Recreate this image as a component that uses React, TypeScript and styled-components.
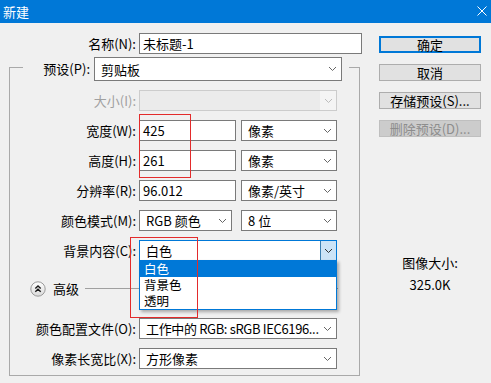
import * as React from "react";
import styled, { createGlobalStyle } from "styled-components";

const GlobalStyle = createGlobalStyle`
  body {
    margin: 0;
    background: #f0f0f0;
    font-family: "Noto Sans CJK SC", "Noto Sans", sans-serif;
    font-size: 13px;
    color: #000;
  }
  * {
    box-sizing: border-box;
  }
`;

const Window = styled.div`
  position: relative;
  width: 491px;
  height: 383px;
  display: flex;
  flex-direction: column;
  overflow: hidden;
  background: #f0f0f0;
`;

const TitleBar = styled.div`
  height: 23px;
  flex: none;
  display: flex;
  align-items: center;
  justify-content: space-between;
  padding: 0 4px 1px 3px;
  background: #0078d7;
  color: #fff;
  font-size: 13px;
`;

const Body = styled.div`
  flex: 1;
  display: flex;
`;

const LeftColumn = styled.div`
  width: 370px;
  padding-left: 9px;
  display: flex;
  flex-direction: column;
`;

const RightColumn = styled.div`
  width: 102px;
  margin-left: 9px;
  padding-top: 13px;
  display: flex;
  flex-direction: column;
`;

const Row = styled.div<{ $top?: number }>`
  display: flex;
  align-items: center;
  height: 21px;
  margin-top: ${(p) => p.$top ?? 9}px;
`;

const Label = styled.div<{ $width: number; $disabled?: boolean }>`
  width: ${(p) => p.$width}px;
  flex: none;
  margin-right: 3px;
  text-align: right;
  white-space: nowrap;
  color: ${(p) => (p.$disabled ? "#a0a0a0" : "#000")};
`;

const TextInput = styled.div<{ $width: number }>`
  width: ${(p) => p.$width}px;
  height: 21px;
  flex: none;
  display: flex;
  align-items: center;
  padding-left: 3px;
  background: #fff;
  border: 1px solid #7a7a7a;
`;

const Select = styled.div<{ $width: number; $height?: number; $gap?: number }>`
  position: relative;
  width: ${(p) => p.$width}px;
  height: ${(p) => p.$height ?? 21}px;
  flex: none;
  margin-left: ${(p) => p.$gap ?? 0}px;
  display: flex;
  align-items: center;
  justify-content: space-between;
  gap: 2px;
  padding: 0 4px 0 6px;
  background: #fff;
  border: 1px solid #7a7a7a;
  white-space: nowrap;
`;

const DisabledSelect = styled(Select)`
  padding-right: 0;
  background: #ebebeb;
  border-color: #cccccc;
`;

const FocusedSelect = styled(Select)`
  padding-right: 0;
  border-color: #0078d7;
`;

const SelectText = styled.span<{ $tight?: boolean }>`
  overflow: hidden;
  letter-spacing: ${(p) => (p.$tight ? "-0.35px" : "normal")};
`;

const ChevronBox = styled.div<{ $active?: boolean }>`
  width: 16px;
  height: 100%;
  display: flex;
  align-items: center;
  justify-content: center;
  background: ${(p) => (p.$active ? "#cce4f7" : "#f4f4f4")};
  border-left: 1px solid ${(p) => (p.$active ? "#3c7fb1" : "transparent")};
`;

const DropList = styled.div`
  position: absolute;
  top: 100%;
  left: -1px;
  width: 198px;
  background: #fff;
  border: 1px solid #0078d7;
  box-shadow: 2px 2px 3px rgba(0, 0, 0, 0.3);
  z-index: 2;
`;

const DropItem = styled.div<{ $selected?: boolean }>`
  height: 16px;
  line-height: 16px;
  font-size: 12.5px;
  padding-left: 4px;
  background: ${(p) => (p.$selected ? "#0078d7" : "#fff")};
  color: ${(p) => (p.$selected ? "#fff" : "#000")};
`;

const Group = styled.fieldset`
  width: 351px;
  margin: 3px 0 0 0;
  padding: 13px 0 6px 0;
  border: 1px solid #a9a9a9;
  min-width: 0;
`;

const Legend = styled.legend`
  margin-left: 13px;
  padding: 0 7px 0 0;
`;

const LegendRow = styled.div`
  display: flex;
  align-items: flex-start;
  height: 20px;
`;

const LegendLabel = styled.div`
  width: 67px;
  line-height: 24px;
  text-align: right;
  white-space: nowrap;
`;

const AdvancedRow = styled.div`
  display: flex;
  align-items: center;
  height: 39px;
  margin-top: 9px;
  padding: 0 21px 2px 20px;
`;

const AdvancedText = styled.span`
  margin-left: 7px;
`;

const Divider = styled.div`
  flex: 1;
  height: 1px;
  margin-left: 6px;
  background: #a0a0a0;
`;

const Button = styled.div<{ $primary?: boolean; $disabled?: boolean }>`
  height: 17px;
  margin-bottom: 11px;
  display: flex;
  align-items: center;
  justify-content: center;
  font-size: 13px;
  background: ${(p) => (p.$disabled ? "#cccccc" : "#e1e1e1")};
  color: ${(p) => (p.$disabled ? "#8d8d8d" : "#000")};
  border: ${(p) => (p.$primary ? "2px solid #0078d7" : p.$disabled ? "1px solid #bfbfbf" : "1px solid #adadad")};
`;

const Info = styled.div`
  margin-top: 106px;
  text-align: center;
  line-height: 18px;
`;

const InfoValue = styled.div`
  margin-top: 4px;
`;

const Mark = styled.div<{ $x: number; $y: number; $w: number; $h: number }>`
  position: absolute;
  left: ${(p) => p.$x}px;
  top: ${(p) => p.$y}px;
  width: ${(p) => p.$w}px;
  height: ${(p) => p.$h}px;
  border: 1px solid #e32b2b;
  z-index: 5;
  pointer-events: none;
`;

const Chevron = ({ color = "#666" }: { color?: string }) => (
  <svg width="9" height="6" viewBox="0 0 9 6" style={{ flex: "none" }}>
    <path d="M1 1 L4.5 4.5 L8 1" fill="none" stroke={color} strokeWidth="1" />
  </svg>
);

const CloseIcon = () => (
  <svg width="10" height="10" viewBox="0 0 10 10">
    <path d="M0.5 0.5 L9.5 9.5 M9.5 0.5 L0.5 9.5" stroke="#fff" strokeWidth="1" />
  </svg>
);

const CollapseIcon = () => (
  <svg width="16" height="16" viewBox="0 0 16 16">
    <defs>
      <linearGradient id="cg" x1="0" y1="0" x2="0" y2="1">
        <stop offset="0" stopColor="#ffffff" />
        <stop offset="1" stopColor="#d9d9d9" />
      </linearGradient>
    </defs>
    <circle cx="8" cy="8" r="7.2" fill="url(#cg)" stroke="#9a9a9a" strokeWidth="1" />
    <path d="M5.3 7.6 L8 5 L10.7 7.6 M5.3 10.8 L8 8.2 L10.7 10.8" fill="none" stroke="#1a1a1a" strokeWidth="1.4" />
  </svg>
);

export default function App() {
  return (
    <Window>
      <GlobalStyle />
      <TitleBar>
        <span>新建</span>
        <CloseIcon />
      </TitleBar>
      <Body>
        <LeftColumn>
          <Row $top={10}>
            <Label $width={127}>名称(N):</Label>
            <TextInput $width={223}>未标题-1</TextInput>
          </Row>
          <Group>
            <Legend>
              <LegendRow>
                <LegendLabel>预设(P):</LegendLabel>
                <Select $width={248} $height={24} $gap={4}>
                  <SelectText>剪贴板</SelectText>
                  <Chevron />
                </Select>
              </LegendRow>
            </Legend>
            <Row $top={0}>
              <Label $width={126} $disabled>
                大小(I):
              </Label>
              <DisabledSelect $width={198}>
                <SelectText />
                <ChevronBox>
                  <Chevron color="#bcbcbc" />
                </ChevronBox>
              </DisabledSelect>
            </Row>
            <Row>
              <Label $width={126}>宽度(W):</Label>
              <TextInput $width={97}>425</TextInput>
              <Select $width={96} $gap={5}>
                <SelectText>像素</SelectText>
                <Chevron />
              </Select>
            </Row>
            <Row>
              <Label $width={126}>高度(H):</Label>
              <TextInput $width={97}>261</TextInput>
              <Select $width={96} $gap={5}>
                <SelectText>像素</SelectText>
                <Chevron />
              </Select>
            </Row>
            <Row>
              <Label $width={126}>分辨率(R):</Label>
              <TextInput $width={97}>96.012</TextInput>
              <Select $width={96} $gap={5}>
                <SelectText>像素/英寸</SelectText>
                <Chevron />
              </Select>
            </Row>
            <Row>
              <Label $width={126}>颜色模式(M):</Label>
              <Select $width={93}>
                <SelectText>RGB 颜色</SelectText>
                <Chevron />
              </Select>
              <Select $width={96} $gap={9}>
                <SelectText>8 位</SelectText>
                <Chevron />
              </Select>
            </Row>
            <Row>
              <Label $width={126}>背景内容(C):</Label>
              <FocusedSelect $width={198}>
                <SelectText>白色</SelectText>
                <ChevronBox $active>
                  <Chevron color="#333" />
                </ChevronBox>
                <DropList>
                  <DropItem $selected>白色</DropItem>
                  <DropItem>背景色</DropItem>
                  <DropItem>透明</DropItem>
                </DropList>
              </FocusedSelect>
            </Row>
            <AdvancedRow>
              <CollapseIcon />
              <AdvancedText>高级</AdvancedText>
              <Divider />
            </AdvancedRow>
            <Row>
              <Label $width={126}>颜色配置文件(O):</Label>
              <Select $width={198}>
                <SelectText $tight>工作中的 RGB: sRGB IEC6196...</SelectText>
                <Chevron />
              </Select>
            </Row>
            <Row>
              <Label $width={126}>像素长宽比(X):</Label>
              <Select $width={198}>
                <SelectText>方形像素</SelectText>
                <Chevron />
              </Select>
            </Row>
          </Group>
        </LeftColumn>
        <RightColumn>
          <Button $primary>确定</Button>
          <Button>取消</Button>
          <Button>存储预设(S)...</Button>
          <Button $disabled>删除预设(D)...</Button>
          <Info>
            <div>图像大小:</div>
            <InfoValue>325.0K</InfoValue>
          </Info>
        </RightColumn>
      </Body>
      <Mark $x={139} $y={114} $w={52} $h={64} />
      <Mark $x={130} $y={237} $w={68} $h={81} />
    </Window>
  );
}
